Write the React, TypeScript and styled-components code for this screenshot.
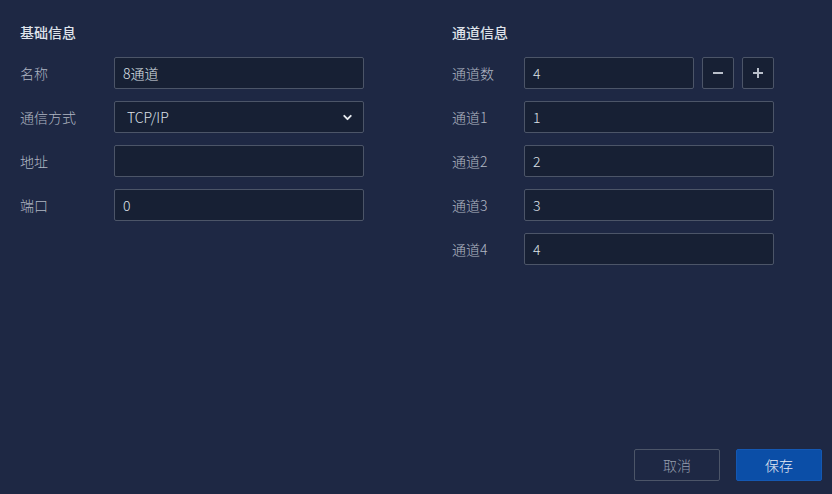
import React from 'react';
import styled, { createGlobalStyle } from 'styled-components';
import { ChevronDown } from 'lucide-react';

const GlobalStyle = createGlobalStyle`
  html, body { margin: 0; padding: 0; }
  body {
    background: #1e2844;
    font-family: "Noto Sans CJK SC", "Noto Sans", sans-serif;
  }
  * { box-sizing: border-box; }
`;

const Page = styled.div`
  height: 494px;
  display: flex;
  flex-direction: column;
  padding: 20px 10px 13px 20px;
  background: #1e2844;
`;

const Columns = styled.div`
  display: flex;
  gap: 88px;
`;

const Section = styled.section`
  width: ${(p: { $w: number }) => p.$w}px;
  display: flex;
  flex-direction: column;
  gap: 12px;
`;

const Heading = styled.h3`
  margin: 0 0 1px;
  font-size: 14px;
  line-height: 24px;
  font-weight: 500;
  color: #dfe3ea;
`;

const Row = styled.div`
  display: flex;
  align-items: center;
  height: 32px;
`;

const Label = styled.span<{ $w: number }>`
  width: ${(p) => p.$w}px;
  flex: none;
  font-size: 14px;
  font-weight: 300;
  color: #b0b7c3;
`;

const Field = styled.div`
  flex: 1;
  height: 32px;
  display: flex;
  align-items: center;
  justify-content: space-between;
  padding: 0 9px 0 8px;
  background: #172034;
  border: 1px solid #4c5568;
  border-radius: 2px;
  font-size: 14px;
  font-weight: 300;
  color: #dde1e8;
`;

const SelectField = styled(Field)`
  padding-left: 12px;
  svg { color: #e8ebf0; }
`;

const Stepper = styled.button`
  width: 32px;
  height: 32px;
  flex: none;
  margin-left: 8px;
  display: flex;
  align-items: center;
  justify-content: center;
  padding: 0;
  background: #172034;
  border: 1px solid #4c5568;
  border-radius: 2px;
  color: #b9bfca;
`;

const Footer = styled.div`
  margin-top: auto;
  display: flex;
  justify-content: flex-end;
  gap: 16px;
`;

const Button = styled.button<{ $primary?: boolean }>`
  width: 86px;
  height: 32px;
  border-radius: 2px;
  font-family: inherit;
  font-size: 14px;
  font-weight: 300;
  background: ${(p) => (p.$primary ? '#0b4ea7' : 'transparent')};
  border: 1px solid ${(p) => (p.$primary ? '#1458b3' : '#4c5568')};
  color: ${(p) => (p.$primary ? '#e8edf5' : '#959eae')};
`;

const MinusIcon = () => (
  <svg width="10" height="10" viewBox="0 0 10 10">
    <path d="M0 5h10" stroke="currentColor" strokeWidth="2" />
  </svg>
);

const PlusIcon = () => (
  <svg width="10" height="10" viewBox="0 0 10 10">
    <path d="M0 5h10M5 0v10" stroke="currentColor" strokeWidth="2" />
  </svg>
);

const channels = ['1', '2', '3', '4'];

export default function App() {
  return (
    <>
      <GlobalStyle />
      <Page>
        <Columns>
          <Section $w={344}>
            <Heading>基础信息</Heading>
            <Row>
              <Label $w={94}>名称</Label>
              <Field>8通道</Field>
            </Row>
            <Row>
              <Label $w={94}>通信方式</Label>
              <SelectField>
                TCP/IP
                <ChevronDown size={13} strokeWidth={3.5} />
              </SelectField>
            </Row>
            <Row>
              <Label $w={94}>地址</Label>
              <Field />
            </Row>
            <Row>
              <Label $w={94}>端口</Label>
              <Field>0</Field>
            </Row>
          </Section>
          <Section $w={322}>
            <Heading>通道信息</Heading>
            <Row>
              <Label $w={72}>通道数</Label>
              <Field>4</Field>
              <Stepper><MinusIcon /></Stepper>
              <Stepper><PlusIcon /></Stepper>
            </Row>
            {channels.map((c) => (
              <Row key={c}>
                <Label $w={72}>通道{c}</Label>
                <Field>{c}</Field>
              </Row>
            ))}
          </Section>
        </Columns>
        <Footer>
          <Button>取消</Button>
          <Button $primary>保存</Button>
        </Footer>
      </Page>
    </>
  );
}
